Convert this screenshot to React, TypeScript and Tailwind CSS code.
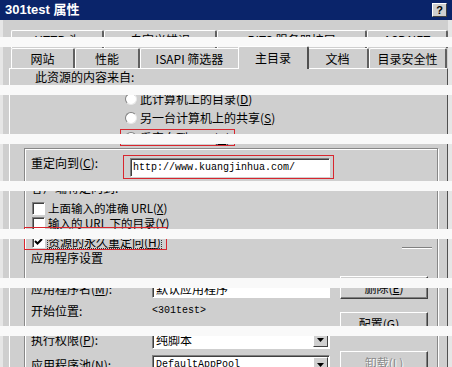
import React from "react";

const bands = [37, 85, 134, 181, 229, 278, 326];

function Tab({ label, w, selected }: { label: string; w: number; selected?: boolean }) {
  if (selected) {
    return (
      <div
        style={{ width: w + 4 }}
        className="relative z-10 -mx-[2px] -mt-[2px] h-[23px] bg-[#cfcfcf] border-l border-t border-white border-r-2 border-r-[#505050] rounded-t-[2px] flex justify-center pt-[4px] leading-[14px]"
      >
        {label}
      </div>
    );
  }
  return (
    <div
      style={{ width: w }}
      className="h-full bg-[#cfcfcf] border-l border-t border-white border-r-2 border-r-[#606060] rounded-t-[2px] flex items-center justify-center leading-[14px]"
    >
      {label}
    </div>
  );
}

function Radio({ checked }: { checked?: boolean }) {
  return (
    <div className="w-[12px] h-[12px] rounded-full bg-white border border-t-[#808080] border-l-[#808080] border-b-[#e8e8e8] border-r-[#e8e8e8] flex items-center justify-center shrink-0">
      {checked && <div className="w-[4px] h-[4px] rounded-full bg-black" />}
    </div>
  );
}

function Check({ checked }: { checked?: boolean }) {
  return (
    <div className="w-[13px] h-[13px] bg-white border border-t-[#808080] border-l-[#808080] border-b-white border-r-white shadow-[inset_1px_1px_0_#404040] shrink-0 flex items-center justify-center">
      {checked && (
        <svg width="9" height="9" viewBox="0 0 9 9">
          <path d="M1 4 L3.5 6.5 L8 2" stroke="#000" strokeWidth="2" fill="none" />
        </svg>
      )}
    </div>
  );
}

function Button({ label, disabled, className = "" }: { label: React.ReactNode; disabled?: boolean; className?: string }) {
  return (
    <div
      className={`h-[23px] w-[88px] bg-[#cfcfcf] border border-t-white border-l-white border-r-[#404040] border-b-[#404040] shadow-[inset_-1px_-1px_0_#808080] flex items-center justify-center leading-[14px] ${
        disabled ? "text-[#8a8a8a] [text-shadow:1px_1px_0_#ffffff]" : "text-black"
      } ${className}`}
    >
      {label}
    </div>
  );
}

function Sunken({ children, w, h, className = "" }: { children?: React.ReactNode; w: number; h: number; className?: string }) {
  return (
    <div
      style={{ width: w, height: h }}
      className={`bg-white border border-t-[#808080] border-l-[#808080] border-b-white border-r-white shadow-[inset_1px_1px_0_#404040] flex items-center ${className}`}
    >
      {children}
    </div>
  );
}

function Select({ value, mono }: { value: string; mono?: boolean }) {
  return (
    <Sunken w={178} h={19} className="justify-between pl-[3px] pr-[1px]">
      <span className={mono ? "font-['Liberation_Mono',monospace] text-[10px] leading-[14px]" : "leading-[14px]"}>{value}</span>
      <div className="w-[15px] h-[15px] bg-[#cfcfcf] border border-t-white border-l-white border-r-[#404040] border-b-[#404040] flex items-center justify-center">
        <svg width="7" height="4" viewBox="0 0 7 4">
          <path d="M0 0 H7 L3.5 4 Z" fill="#000" />
        </svg>
      </div>
    </Sunken>
  );
}

export default function App() {
  return (
    <div className="relative w-[452px] h-[367px] overflow-hidden bg-[#cfcfcf] text-[12px] text-black font-['Noto_Sans_CJK_SC',sans-serif]">
      {/* title bar */}
      <div className="h-[20px] bg-[#0a246a] flex items-center justify-between pl-[5px] pr-[5px]">
        <span className="text-white font-bold text-[13px] leading-[16px] font-['Liberation_Sans','Noto_Sans_CJK_SC',sans-serif]">
          301test 属性
        </span>
        <div className="w-[15px] h-[14px] bg-[#cfcfcf] border border-t-white border-l-white border-r-[#404040] border-b-[#404040] flex items-center justify-center text-[11px] font-bold leading-none font-['Liberation_Sans',sans-serif]">
          ?
        </div>
      </div>

      {/* body */}
      <div className="h-[347px] border-l-[3px] border-l-[#e6e6e6] border-r-[4px] border-r-[#e6e6e6]">
        {/* tabs row 1 */}
        <div className="pt-[10px] pl-[8px]">
          <div className="flex h-[18px]">
            <Tab label="HTTP 头" w={93} />
            <Tab label="自定义错误" w={113} />
            <Tab label="BITS 服务器扩展" w={150} />
            <Tab label="ASP.NET" w={81} />
          </div>
          {/* tabs row 2 */}
          <div className="flex h-[20px]">
            <Tab label="网站" w={64} />
            <Tab label="性能" w={65} />
            <Tab label="ISAPI 筛选器" w={100} />
            <Tab label="主目录" w={67} selected />
            <Tab label="文档" w={62} />
            <Tab label="目录安全性" w={78} />
          </div>
        </div>

        {/* panel */}
        <div className="ml-[6px] w-[439px] h-[300px] border-l border-t border-white border-r border-r-[#505050]">
          <div className="mt-[1px] pl-[25px] h-[14px] leading-[14px]">此资源的内容来自:</div>

          <div className="mt-[5px] pl-[115px]">
            <div className="h-[19px] flex items-center gap-[3px]">
              <Radio />
              <span className="leading-[14px]">此计算机上的目录(<u>D</u>)</span>
            </div>
            <div className="h-[19px] flex items-center gap-[3px]">
              <Radio />
              <span className="leading-[14px]">另一台计算机上的共享(<u>S</u>)</span>
            </div>
            <div className="mt-[2px] -ml-[5px] w-[115px] h-[17px] border border-[#d8262e] flex items-center gap-[3px] pl-[4px]">
              <Radio checked />
              <span className="leading-[14px]">重定向到 URL(<u>U</u>)</span>
            </div>
          </div>

          {/* group box */}
          <div className="mt-[2px] ml-[14px] w-[414px] h-[240px] border border-[#888888] shadow-[inset_1px_1px_0_#ffffff,1px_1px_0_#ffffff]">
            <div className="mt-[6px] h-[24px] flex items-start">
              <div className="w-[98px] pl-[6px] pt-[1px] leading-[14px]">重定向到(<u>C</u>):</div>
              <div className="w-[211px] h-[24px] border border-[#d8262e] pl-[6px] pt-[2px]">
                <Sunken w={200} h={19} className="pl-[2px]">
                  <span className="font-['Liberation_Mono',monospace] text-[10px] leading-[14px]">http://www.kuangjinhua.com/</span>
                </Sunken>
              </div>
            </div>

            <div className="mt-[2px] h-[14px] pl-[6px] leading-[14px]">客户端将定向到:</div>

            <div className="mt-[6px] h-[14px] flex items-center gap-[3px] pl-[7px]">
              <Check />
              <span className="text-[11.5px] leading-[12px]">上面输入的准确 URL(<u>X</u>)</span>
            </div>
            <div className="mt-[1px] h-[14px] flex items-center gap-[3px] pl-[7px]">
              <Check />
              <span className="text-[11.5px] leading-[12px]">输入的 URL 下的目录(<u>Y</u>)</span>
            </div>
            <div className="-mt-[3px] h-[23px] flex">
              <div className="-ml-[1px] w-[143px] h-[23px] border border-[#d8262e] flex items-center gap-[3px] pl-[7px] pt-[6px]">
                <Check checked />
                <span className="leading-[13px] outline-1 outline-dotted outline-[#333333]">资源的永久重定向(<u>H</u>)</span>
              </div>
              <div className="ml-auto mr-[5px] w-[30px] h-[2px] self-end mb-[1px] border-t border-t-[#808080] border-b border-b-white" />
            </div>

            <div className="mt-[1px] h-[14px] pl-[6px] leading-[14px]">应用程序设置</div>

            <div className="mt-[11px] flex">
              <div className="w-[305px] pl-[6px]">
                <div className="mt-[4px] h-[18px] flex items-center">
                  <div className="w-[121px] leading-[14px]">应用程序名(<u>M</u>):</div>
                  <Sunken w={178} h={18} className="pl-[3px]">
                    <span className="leading-[14px]">默认应用程序</span>
                  </Sunken>
                </div>
                <div className="mt-[4px] h-[18px] flex items-center">
                  <div className="w-[121px] leading-[14px]">开始位置:</div>
                  <span className="font-['Liberation_Mono',monospace] text-[10px] leading-[14px]">&lt;301test&gt;</span>
                </div>
                <div className="mt-[10px] h-[19px] flex items-center">
                  <div className="w-[121px] leading-[14px]">执行权限(<u>P</u>):</div>
                  <Select value="纯脚本" />
                </div>
                <div className="mt-[6px] h-[19px] flex items-center">
                  <div className="w-[121px] leading-[14px]">应用程序池(<u>N</u>):</div>
                  <Select value="DefaultAppPool" mono />
                </div>
              </div>
              <div className="ml-[10px] flex flex-col">
                <Button label={<span>删除(<u>E</u>)</span>} />
                <Button className="mt-[13px]" label={<span>配置(<u>G</u>)...</span>} />
                <Button className="mt-[16px]" disabled label={<span>卸载(<u>L</u>)</span>} />
              </div>
            </div>
          </div>
        </div>
      </div>

      {/* white scan bands */}
      {bands.map((y) => (
        <div key={y} style={{ top: y }} className="absolute left-0 w-full h-[10px] bg-[#f9f9f9]" />
      ))}
    </div>
  );
}
